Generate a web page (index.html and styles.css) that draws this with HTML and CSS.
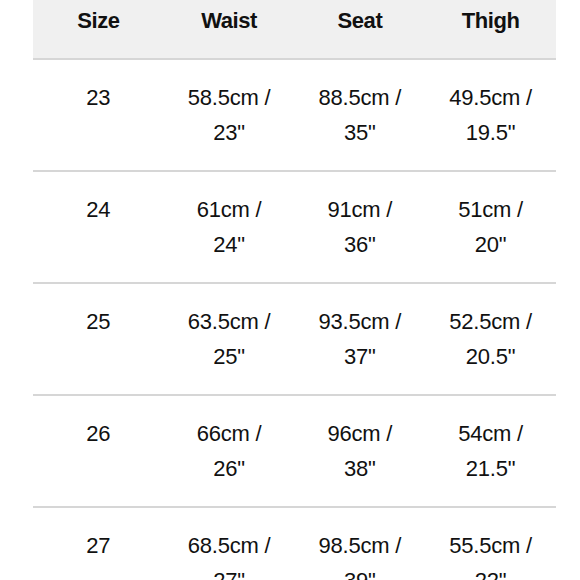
FILE: index.html
```html
<!DOCTYPE html>
<html>
<head>
<meta charset="utf-8">
<link rel="stylesheet" href="styles.css">
</head>
<body>
<div class="table">
  <div class="row head">
    <div class="cell">Size</div>
    <div class="cell">Waist</div>
    <div class="cell">Seat</div>
    <div class="cell">Thigh</div>
  </div>
  <div class="row">
    <div class="cell">23</div>
    <div class="cell">58.5cm /<br>23"</div>
    <div class="cell">88.5cm /<br>35"</div>
    <div class="cell">49.5cm /<br>19.5"</div>
  </div>
  <div class="row">
    <div class="cell">24</div>
    <div class="cell">61cm /<br>24"</div>
    <div class="cell">91cm /<br>36"</div>
    <div class="cell">51cm /<br>20"</div>
  </div>
  <div class="row">
    <div class="cell">25</div>
    <div class="cell">63.5cm /<br>25"</div>
    <div class="cell">93.5cm /<br>37"</div>
    <div class="cell">52.5cm /<br>20.5"</div>
  </div>
  <div class="row">
    <div class="cell">26</div>
    <div class="cell">66cm /<br>26"</div>
    <div class="cell">96cm /<br>38"</div>
    <div class="cell">54cm /<br>21.5"</div>
  </div>
  <div class="row">
    <div class="cell">27</div>
    <div class="cell">68.5cm /<br>27"</div>
    <div class="cell">98.5cm /<br>39"</div>
    <div class="cell">55.5cm /<br>22"</div>
  </div>
</div>
</body>
</html>
```

FILE: styles.css
```css
html, body {
  margin: 0;
  padding: 0;
  background: #ffffff;
  overflow: hidden;
}
body {
  font-family: "Liberation Sans", Arial, sans-serif;
  color: #111111;
  font-size: 22px;
  line-height: 35px;
  letter-spacing: -0.2px;
}
.table {
  margin-left: 33px;
  width: 523px;
  display: flex;
  flex-direction: column;
}
.row {
  display: grid;
  grid-template-columns: repeat(4, 1fr);
  border-bottom: 2px solid #d6d6d6;
  height: 110px;
}
.cell {
  text-align: center;
  padding-top: 20px;
}
.head {
  background: #f0f0f0;
  height: 58px;
  font-weight: bold;
  letter-spacing: -0.4px;
}
.head .cell {
  padding-top: 3px;
}
```
